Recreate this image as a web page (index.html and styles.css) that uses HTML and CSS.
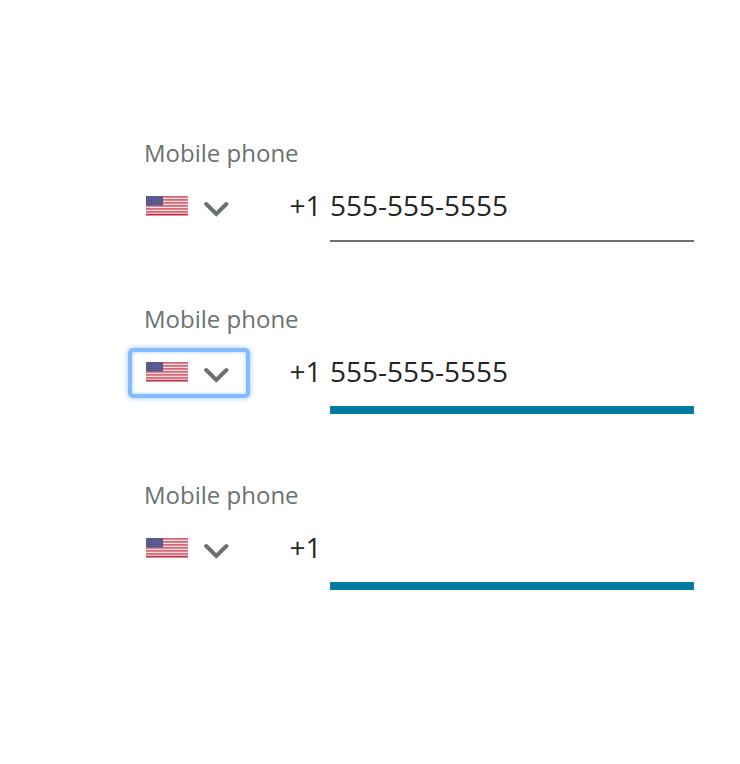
FILE: index.html
```html
<!DOCTYPE html>
<html lang="en">
<head>
<meta charset="utf-8">
<title>Mobile phone</title>
<link rel="stylesheet" href="styles.css">
</head>
<body>
<svg width="0" height="0" class="defs">
  <symbol id="flag" viewBox="0 0 42 20">
    <rect width="42" height="19.600" fill="#f3e0e3"/>
    <path d="M0 .8h42M0 3.800h42M0 6.800h42M0 9.800h42M0 12.800h42M0 15.800h42" stroke="#d46877" stroke-width="1.8"/>
    <path d="M0 18.600h42" stroke="#c52f42" stroke-width="1.600"/>
    <rect width="17" height="9.500" fill="#57568a"/>
    <path d="M1 1.500h15M1 3.500h15M1 5.500h15M1 7.500h15" stroke="#77769f" stroke-width=".6" stroke-dasharray="1 1.500"/>
  </symbol>
  <symbol id="chevron" viewBox="0 0 26 16">
    <path d="M3.200 3L13.300 13L23.400 3" fill="none" stroke="#69706f" stroke-width="4" stroke-linecap="round"/>
  </symbol>
</svg>
<main class="fields">
  <section class="field">
    <div class="label">Mobile phone</div>
    <div class="row">
      <div class="country"><svg class="flag"><use href="#flag"/></svg><svg class="chevron"><use href="#chevron"/></svg></div>
      <span class="code">+1</span>
      <div class="number">555-555-5555</div>
    </div>
  </section>
  <section class="field active">
    <div class="label">Mobile phone</div>
    <div class="row">
      <div class="country focused"><svg class="flag"><use href="#flag"/></svg><svg class="chevron"><use href="#chevron"/></svg></div>
      <span class="code">+1</span>
      <div class="number">555-555-5555</div>
    </div>
  </section>
  <section class="field active">
    <div class="label">Mobile phone</div>
    <div class="row">
      <div class="country"><svg class="flag"><use href="#flag"/></svg><svg class="chevron"><use href="#chevron"/></svg></div>
      <span class="code">+1</span>
      <div class="number"></div>
    </div>
  </section>
</main>
</body>
</html>
```
FILE: styles.css
```css
* { box-sizing: border-box; }
body { margin: 0; background: #fff; font-family: "Open Sans", sans-serif; }
.defs { display: block; }
.fields { padding: 135px 46px 0 132px; }
.field { height: 166px; }
.field.active { height: 176px; }
.label { height: 36px; padding-left: 12px; font-size: 24px; line-height: 36px; color: #6b7271; }
.row { display: flex; height: 78px; padding-top: 10px; }
.country { display: flex; width: 114px; height: 42px; margin-top: 5px; padding-left: 14px; }
.focused { border-radius: 2px; box-shadow: 0 0 0 4px #84bcff, 0 0 4px 5px #b0d4ff, inset 0 0 3px 1px #c6e0ff; }
.flag { width: 42px; height: 20px; margin-top: 10px; }
.chevron { width: 26px; height: 16px; margin: 15px 0 0 15px; }
.code { width: 84px; padding-left: 43.5px; font-size: 28px; line-height: 48px; color: #232725; white-space: nowrap; }
.number { flex: 1; height: 61px; border-bottom: 2px solid #6b7271; font-size: 28px; line-height: 48px; color: #232725; }
.active .number { height: 67px; border-bottom: 8px solid #007a9e; }
```
